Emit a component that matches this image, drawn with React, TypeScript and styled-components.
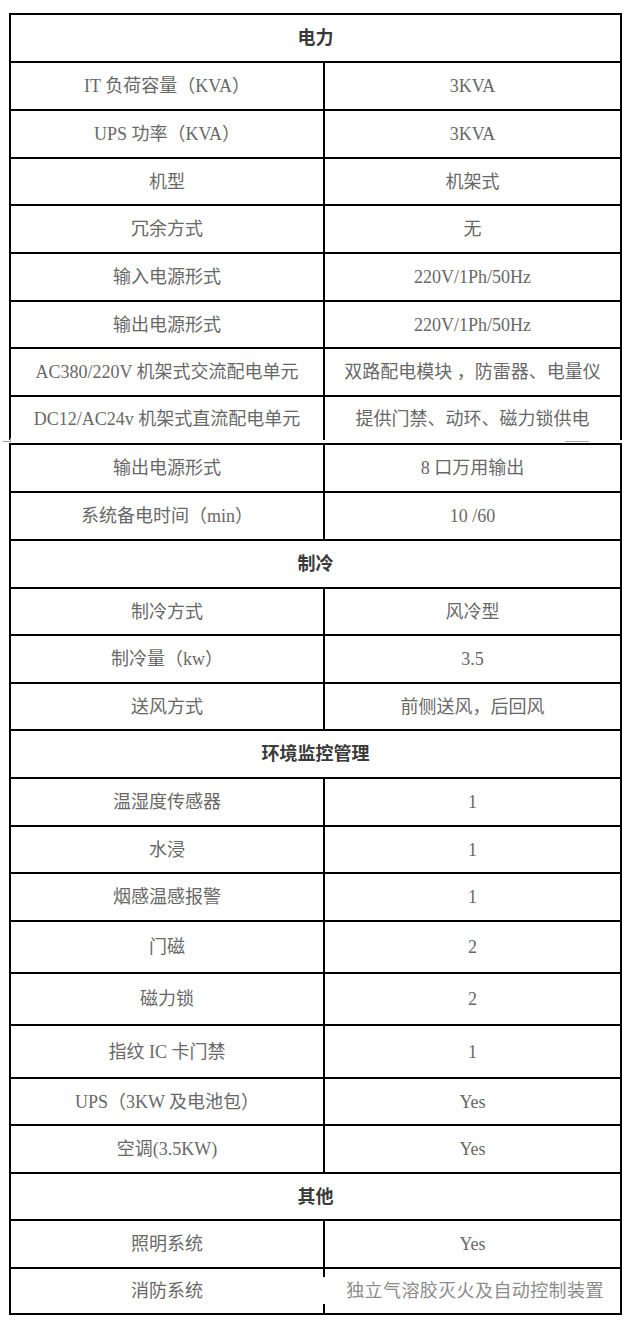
import React from 'react';
import styled, { createGlobalStyle } from 'styled-components';

type Row =
  | { kind: 'section'; title: string; h: number }
  | { kind: 'item'; label: string; value: string; h: number; open?: boolean; glitch?: boolean };

const firstSheet: Row[] = [
  { kind: 'section', title: '电力', h: 48 },
  { kind: 'item', label: 'IT 负荷容量（KVA）', value: '3KVA', h: 48 },
  { kind: 'item', label: 'UPS 功率（KVA）', value: '3KVA', h: 48 },
  { kind: 'item', label: '机型', value: '机架式', h: 47 },
  { kind: 'item', label: '冗余方式', value: '无', h: 48 },
  { kind: 'item', label: '输入电源形式', value: '220V/1Ph/50Hz', h: 48 },
  { kind: 'item', label: '输出电源形式', value: '220V/1Ph/50Hz', h: 47 },
  { kind: 'item', label: 'AC380/220V 机架式交流配电单元', value: '双路配电模块 ，防雷器、电量仪', h: 48 },
  { kind: 'item', label: 'DC12/AC24v 机架式直流配电单元', value: '提供门禁、动环、磁力锁供电', h: 43, open: true },
];

const secondSheet: Row[] = [
  { kind: 'item', label: '输出电源形式', value: '8 口万用输出', h: 48 },
  { kind: 'item', label: '系统备电时间（min）', value: '10 /60', h: 48 },
  { kind: 'section', title: '制冷', h: 48 },
  { kind: 'item', label: '制冷方式', value: '风冷型', h: 47 },
  { kind: 'item', label: '制冷量（kw）', value: '3.5', h: 48 },
  { kind: 'item', label: '送风方式', value: '前侧送风，后回风', h: 47 },
  { kind: 'section', title: '环境监控管理', h: 48 },
  { kind: 'item', label: '温湿度传感器', value: '1', h: 48 },
  { kind: 'item', label: '水浸', value: '1', h: 47 },
  { kind: 'item', label: '烟感温感报警', value: '1', h: 48 },
  { kind: 'item', label: '门磁', value: '2', h: 52 },
  { kind: 'item', label: '磁力锁', value: '2', h: 52 },
  { kind: 'item', label: '指纹 IC 卡门禁', value: '1', h: 53 },
  { kind: 'item', label: 'UPS（3KW 及电池包）', value: 'Yes', h: 47 },
  { kind: 'item', label: '空调(3.5KW)', value: 'Yes', h: 48 },
  { kind: 'section', title: '其他', h: 47 },
  { kind: 'item', label: '照明系统', value: 'Yes', h: 48 },
  { kind: 'item', label: '消防系统', value: '独立气溶胶灭火及自动控制装置', h: 46, glitch: true },
];

const GlobalStyle = createGlobalStyle`
  html, body {
    margin: 0;
    padding: 0;
    background: #fff;
  }
  body {
    font-family: "Liberation Serif", "Noto Sans CJK SC", serif;
  }
`;

const Page = styled.div`
  position: relative;
  display: flex;
  flex-direction: column;
  gap: 3px;
  width: 631px;
  height: 1324px;
  padding: 13px 0 0 9px;
  box-sizing: border-box;
`;

const Sheet = styled.div`
  display: grid;
  grid-template-columns: 314px 295px;
  width: 613px;
  box-sizing: border-box;
  border: 2px solid #000;
  border-bottom: none;
`;

const Cell = styled.div<{ $h: number; $open?: boolean }>`
  display: flex;
  align-items: center;
  justify-content: center;
  box-sizing: border-box;
  height: ${(p) => p.$h}px;
  border-bottom: ${(p) => (p.$open ? 'none' : '2px solid #000')};
  font-size: 18px;
  line-height: 1;
  color: #686868;
  white-space: nowrap;
`;

const LabelCell = styled(Cell)`
  border-right: 2px solid #000;
`;

const ValueCell = styled(Cell)<{ $glitch?: boolean }>`
  position: relative;
  color: ${(p) => (p.$glitch ? '#8c8c8c' : '#686868')};
  letter-spacing: ${(p) => (p.$glitch ? '0.4px' : '0')};

  &::before {
    content: '';
    display: ${(p) => (p.$glitch ? 'block' : 'none')};
    position: absolute;
    left: -2px;
    top: 8px;
    width: 22px;
    height: 27px;
    background: #fff;
  }
`;

const GlitchText = styled.span`
  margin-left: 5px;
`;

const SectionCell = styled(Cell)`
  grid-column: 1 / -1;
  font-weight: bold;
  color: #3a3a3a;
`;

/* tiny page-break cursor marks that sit over the table edge */
const BreakMark = styled.div<{ $side: 'left' | 'right' }>`
  position: absolute;
  top: 441px;
  left: ${(p) => (p.$side === 'left' ? '3px' : '565px')};
  width: ${(p) => (p.$side === 'left' ? '8px' : '24px')};
  height: 1px;
  background: ${(p) => (p.$side === 'left' ? '#9a9ab8' : '#a8a8a8')};

  &::after {
    content: '';
    display: ${(p) => (p.$side === 'left' ? 'block' : 'none')};
    position: absolute;
    right: 0;
    top: -3px;
    width: 1px;
    height: 4px;
    background: #9a9ab8;
  }
`;

const renderRows = (rows: Row[]) =>
  rows.map((row, i) =>
    row.kind === 'section' ? (
      <SectionCell key={i} $h={row.h}>
        {row.title}
      </SectionCell>
    ) : (
      <React.Fragment key={i}>
        <LabelCell $h={row.h} $open={row.open}>
          {row.label}
        </LabelCell>
        <ValueCell $h={row.h} $open={row.open} $glitch={row.glitch}>
          {row.glitch ? <GlitchText>{row.value}</GlitchText> : row.value}
        </ValueCell>
      </React.Fragment>
    ),
  );

const App = () => (
  <>
    <GlobalStyle />
    <Page>
      <Sheet>{renderRows(firstSheet)}</Sheet>
      <Sheet>{renderRows(secondSheet)}</Sheet>
      <BreakMark $side="left" />
      <BreakMark $side="right" />
    </Page>
  </>
);

export default App;
